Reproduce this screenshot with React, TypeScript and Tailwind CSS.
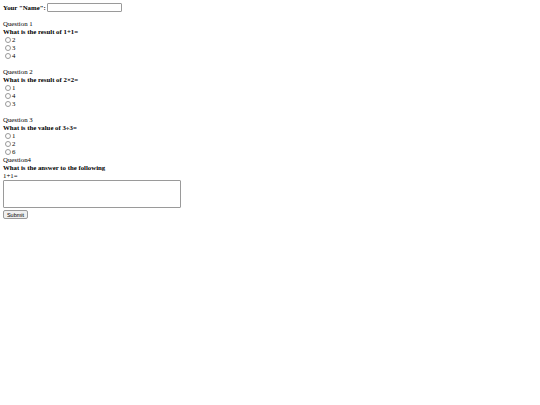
import React from "react";

function Radio({ label }: { label: string }) {
  return (
    <div className="flex items-center h-[8px]">
      <span className="ml-[2px] mr-[1px] w-[6px] h-[6px] rounded-full border border-[#9a9a9a] bg-white box-border" />
      <span>{label}</span>
    </div>
  );
}

function Line({ children, bold }: { children: React.ReactNode; bold?: boolean }) {
  return <div className={"h-[8px] leading-[8px] " + (bold ? "font-bold" : "")}>{children}</div>;
}

export default function App() {
  return (
    <div
      className="w-[540px] h-[405px] bg-white text-black text-[6.8px] leading-[8px] px-[3px] pt-[3px]"
      style={{ fontFamily: '"Liberation Serif", "Times New Roman", serif' }}
    >
      <div className="flex items-center h-[9px]">
        <span className="font-bold">Your "Name":</span>
        <span className="ml-[1px] w-[75px] h-[9px] border border-[#9a9a9a] rounded-[1px] bg-white box-border" />
      </div>
      <div className="h-[8px]" />
      <Line>Question 1</Line>
      <Line bold>What is the result of 1+1=</Line>
      <Radio label="2" />
      <Radio label="3" />
      <Radio label="4" />
      <div className="h-[8px]" />
      <Line>Question 2</Line>
      <Line bold>What is the result of 2×2=</Line>
      <Radio label="1" />
      <Radio label="4" />
      <Radio label="3" />
      <div className="h-[8px]" />
      <Line>Question 3</Line>
      <Line bold>What is the value of 3÷3=</Line>
      <Radio label="1" />
      <Radio label="2" />
      <Radio label="6" />
      <Line>Question4</Line>
      <Line bold>What is the answer to the following</Line>
      <Line>1+1=</Line>
      <div className="w-[178px] h-[28px] border border-[#9a9a9a] rounded-[1px] box-border bg-white" />
      <div className="mt-[2px] inline-flex items-center justify-center w-[25px] h-[9px] border border-[#9a9a9a] rounded-[2px] bg-[#efefef] text-[5.5px] leading-[6px]" style={{ fontFamily: '"Liberation Sans", Arial, sans-serif' }}>
        Submit
      </div>
    </div>
  );
}
